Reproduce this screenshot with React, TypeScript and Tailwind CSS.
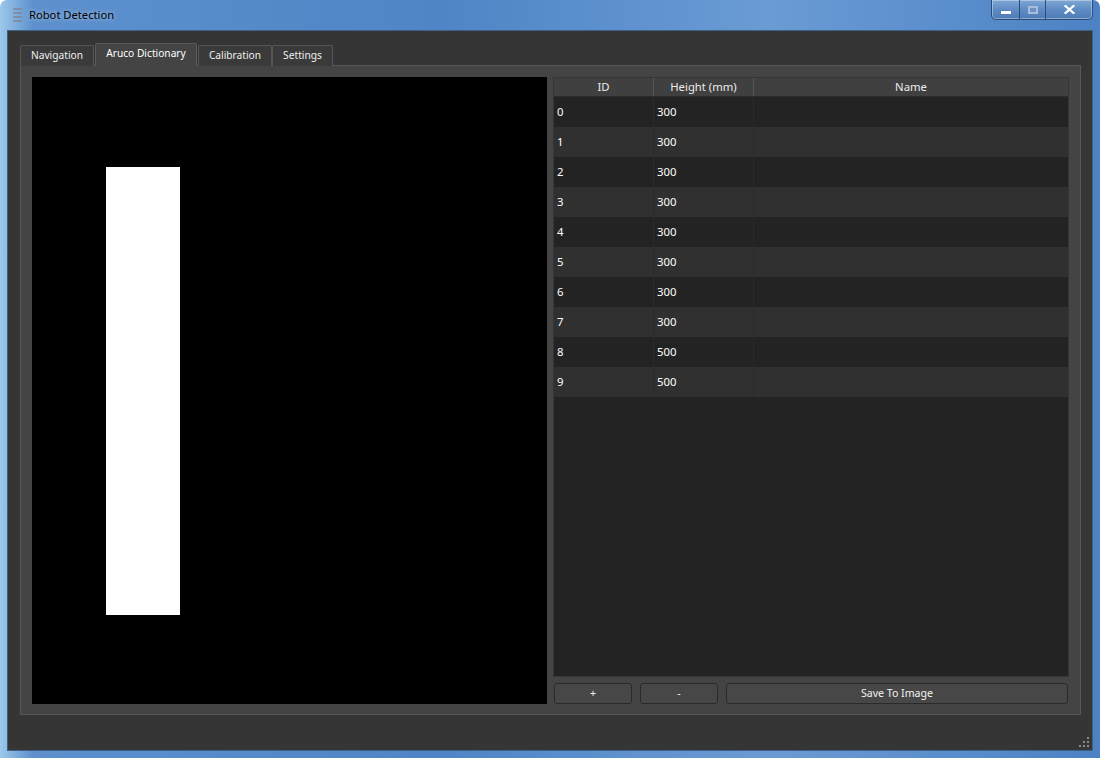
import React from 'react';

const rows = [
  { id: 0, h: 300 },
  { id: 1, h: 300 },
  { id: 2, h: 300 },
  { id: 3, h: 300 },
  { id: 4, h: 300 },
  { id: 5, h: 300 },
  { id: 6, h: 300 },
  { id: 7, h: 300 },
  { id: 8, h: 500 },
  { id: 9, h: 500 },
];

const tabs = [
  { label: 'Navigation', w: 'w-[74px]' },
  { label: 'Aruco Dictionary', w: 'w-[102px]' },
  { label: 'Calibration', w: 'w-[74px]' },
  { label: 'Settings', w: 'w-[61px]' },
];

function TitleButtons() {
  return (
    <div className="flex h-[20px] mr-[7px] rounded-b-[5px] border border-t-0 border-[#2a4d7a] shadow-[inset_0_0_0_1px_rgba(255,255,255,0.35)] bg-[linear-gradient(180deg,#7fa7d6_0%,#5f8cc4_50%,#4e7bb5_100%)] overflow-hidden">
      <div className="w-[28px] flex items-center justify-center border-r border-[#2a4d7a]">
        <div className="w-[10px] h-[3px] mt-[5px] bg-white shadow-[0_0_1px_#333]" />
      </div>
      <div className="w-[26px] flex items-center justify-center border-r border-[#2a4d7a]">
        <div className="w-[10px] h-[8px] border-2 border-[#a7bfdc] bg-[#6d92c2]" />
      </div>
      <div className="w-[46px] flex items-center justify-center">
        <svg width="11" height="9" viewBox="0 0 11 9">
          <path d="M1.5 1 L9.5 8 M9.5 1 L1.5 8" stroke="#ffffff" strokeWidth="2.2" strokeLinecap="square" />
        </svg>
      </div>
    </div>
  );
}

function Grip() {
  const dots = [
    [8, 0],
    [4, 4], [8, 4],
    [0, 8], [4, 8], [8, 8],
  ];
  return (
    <svg width="11" height="11" viewBox="0 0 11 11" className="absolute right-[2px] bottom-[2px]">
      {dots.map(([x, y], i) => (
        <rect key={i} x={x} y={y} width="2" height="2" fill="#8a8a8a" />
      ))}
    </svg>
  );
}

export default function App() {
  return (
    <div className="w-[1100px] h-[758px] flex flex-col rounded-t-[7px] overflow-hidden bg-[linear-gradient(90deg,#9cc8ea_0%,#5d90cd_3%,#4f85c6_40%,#6a9bd4_70%,#4c82c4_100%)] font-['Noto_Sans','Open_Sans',sans-serif]">
      {/* title bar */}
      <div className="h-[30px] flex items-start shrink-0">
        <div className="flex items-center h-[30px] pl-[13px] flex-1">
          <div className="flex flex-col gap-[2px] w-[9px]">
            <div className="h-[2px] bg-[#7f8fa6]" />
            <div className="h-[2px] bg-[#7f8fa6]" />
            <div className="h-[2px] bg-[#7f8fa6]" />
            <div className="h-[2px] bg-[#7f8fa6]" />
          </div>
          <span className="ml-[7px] text-[11.2px] text-black [text-shadow:0_0_5px_rgba(255,255,255,0.6)]">Robot Detection</span>
        </div>
        <TitleButtons />
      </div>

      {/* client area */}
      <div className="relative flex-1 mx-[7px] mb-[7px] bg-[#353535] border border-[#3e5f86] flex flex-col pt-[12px] pl-[12px] pr-[11px] pb-[35px]">
        {/* tab bar */}
        <div className="flex items-end h-[23px] -mb-px relative z-10">
          {tabs.map((t, i) => {
            const active = i === 1;
            return (
              <div
                key={t.label}
                className={
                  active
                    ? `${t.w} h-[23px] mx-px flex items-center justify-center pb-[2px] text-[10.2px] text-white bg-[#444444] border border-b-0 border-[#5a5a5a] rounded-t-[2px]`
                    : `${t.w} h-[21px] flex items-center justify-center text-[10.2px] text-[#f0f0f0] bg-[#3a3a3a] border border-b-0 border-[#555555] rounded-t-[2px]`
                }
              >
                {t.label}
              </div>
            );
          })}
        </div>

        {/* pane */}
        <div className="flex-1 flex gap-[6px] bg-[#444444] border border-[#575757] pt-[11px] pb-[10px] px-[11px]">
          {/* marker image */}
          <div className="w-[515px] shrink-0 bg-black pl-[74px] pt-[90px]">
            <div className="w-[74px] h-[448px] bg-white" />
          </div>

          {/* dictionary */}
          <div className="flex-1 min-w-0 flex flex-col">
            <div className="flex-1 flex flex-col bg-[#232323] border border-[#363636] text-[11.3px]">
              <div className="flex h-[19px] bg-[#404040] text-[#ececec] border-b border-[#2c2c2c]">
                <div className="w-[100px] flex items-center justify-center border-r border-[#555555]">ID</div>
                <div className="w-[100px] flex items-center justify-center border-r border-[#555555]">Height (mm)</div>
                <div className="flex-1 flex items-center justify-center">Name</div>
              </div>
              {rows.map((r, i) => (
                <div
                  key={r.id}
                  className={`flex h-[30px] text-white ${i % 2 === 0 ? 'bg-[#232323]' : 'bg-[#303030]'}`}
                >
                  <div className="w-[100px] flex items-center pl-[3px] border-r border-[#2b2b2b]">{r.id}</div>
                  <div className="w-[100px] flex items-center pl-[3px] border-r border-[#2b2b2b]">{r.h}</div>
                  <div className="flex-1" />
                </div>
              ))}
            </div>
            <div className="flex gap-[8px] mt-[6px] h-[21px] text-[10.6px] text-[#f2f2f2]">
              <button className="w-[78px] ml-px rounded-[3px] border border-[#2a2a2a] bg-[#474747] flex items-center justify-center">+</button>
              <button className="w-[78px] rounded-[3px] border border-[#2a2a2a] bg-[#474747] flex items-center justify-center">-</button>
              <button className="flex-1 mr-px rounded-[3px] border border-[#2a2a2a] bg-[#474747] flex items-center justify-center">Save To Image</button>
            </div>
          </div>
        </div>
        <Grip />
      </div>
    </div>
  );
}
